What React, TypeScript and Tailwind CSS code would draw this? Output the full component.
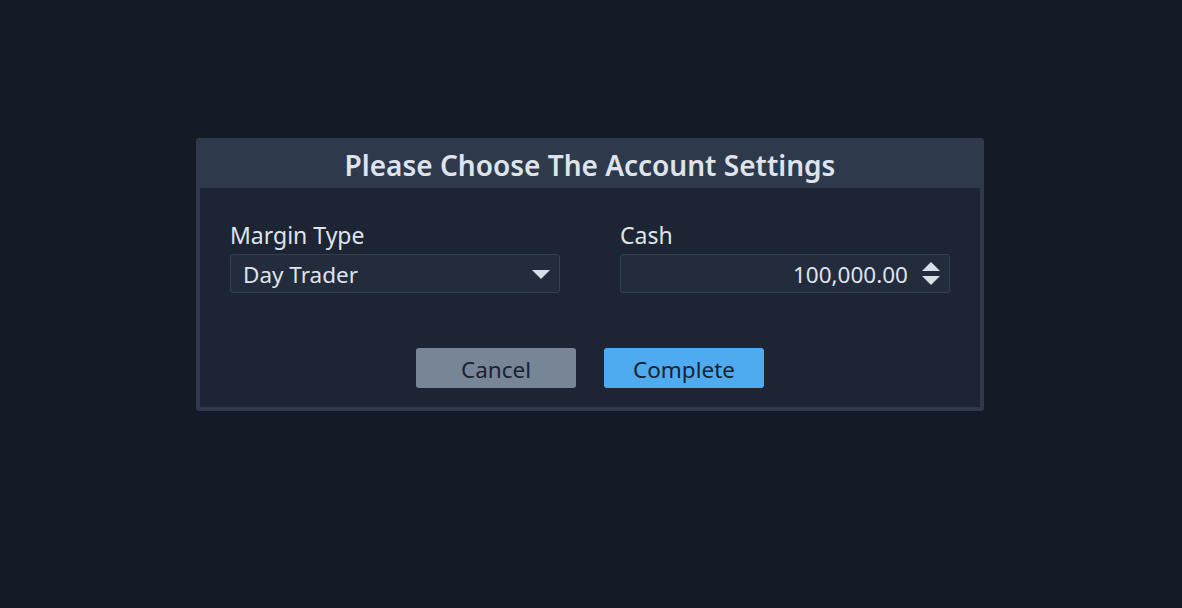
import { useState } from 'react';

const FONT = { fontFamily: '"Noto Sans", "Open Sans", sans-serif' };

function Triangle({ dir }: { dir: 'up' | 'down' }) {
  return (
    <svg width="18" height="9" viewBox="0 0 18 9" className="fill-[#d9dfe8]">
      {dir === 'down' ? <path d="M0 0h18L9 9z" /> : <path d="M0 9h18L9 0z" />}
    </svg>
  );
}

export default function App() {
  const [margin] = useState('Day Trader');
  const [cash] = useState('100,000.00');

  return (
    <div className="min-h-[608px] bg-[#151b26] pr-[2px] pt-[138px]" style={FONT}>
      <div className="mx-auto w-[788px] rounded-[3px] border-4 border-[#2e3a4c] bg-[#1d2433]">
        {/* Header */}
        <div className="flex h-[46px] items-center justify-center bg-[#2e3a4c]">
          <h1 className="text-[28px] font-semibold text-[#dfe4ec]">
            Please Choose The Account Settings
          </h1>
        </div>

        {/* Fields */}
        <div className="grid grid-cols-2 gap-[60px] px-[30px] pt-[31px]">
          <div>
            <label className="block text-[23px] leading-[32px] text-[#dfe4ec]">Margin Type</label>
            <div className="mt-[3px] flex h-[39px] items-center justify-between rounded-[3px] border border-[#343f51] bg-[#222c3c] pl-3 pr-[9px] pt-[2px]">
              <span className="text-[22.5px] text-[#dfe4ec]">{margin}</span>
              <Triangle dir="down" />
            </div>
          </div>
          <div>
            <label className="block text-[23px] leading-[32px] text-[#dfe4ec]">Cash</label>
            <div className="mt-[3px] flex h-[39px] items-center justify-end gap-[14px] rounded-[3px] border border-[#343f51] bg-[#222c3c] pr-[9px]">
              <span className="pt-[2px] text-[22.5px] text-[#dfe4ec]">{cash}</span>
              <div className="flex flex-col gap-[5px]">
                <Triangle dir="up" />
                <Triangle dir="down" />
              </div>
            </div>
          </div>
        </div>

        {/* Actions */}
        <div className="flex justify-center gap-[28px] pb-[19px] pt-[55px]">
          <button className="h-10 w-40 rounded-[3px] bg-[#778597] pt-[3px] text-[22.5px] text-[#1b2230]">
            Cancel
          </button>
          <button className="h-10 w-40 rounded-[3px] bg-[#4eabf0] pt-[3px] text-[22.5px] text-[#1b2230]">
            Complete
          </button>
        </div>
      </div>
    </div>
  );
}
